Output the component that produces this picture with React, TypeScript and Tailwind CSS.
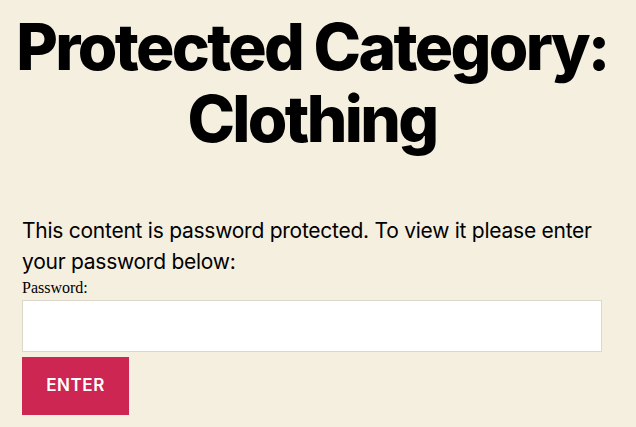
export default function App() {
  return (
    <div className="min-h-screen bg-[#f5efe0] pt-[11px] font-['Inter',sans-serif] text-black">
      <div className="ml-[22px] w-[580px]">
        <h1 className="-mx-[22px] text-center text-[64px] leading-[72px] font-extrabold tracking-[-0.0415em]">
          Protected Category:
          <br />
          Clothing
        </h1>
        <form className="mt-[60px]" onSubmit={(e) => e.preventDefault()}>
          <p className="text-[21px] leading-[31px] tracking-[-0.012em]">
            This content is password protected. To view it please enter your password below:
          </p>
          <label
            htmlFor="pwbox"
            className="mt-[2px] block font-['Liberation_Serif',serif] text-[16px] leading-[18px]"
          >
            Password:
          </label>
          <input
            id="pwbox"
            type="password"
            className="mt-[3px] block h-[52px] w-full border border-[#dcd7ca] bg-white outline-none"
          />
          <button
            type="submit"
            className="mt-[5px] flex h-[58px] w-[107px] items-center justify-center bg-[#cd2653] text-[17px] font-semibold tracking-[0.0333em] text-white uppercase"
          >
            Enter
          </button>
        </form>
      </div>
    </div>
  );
}
